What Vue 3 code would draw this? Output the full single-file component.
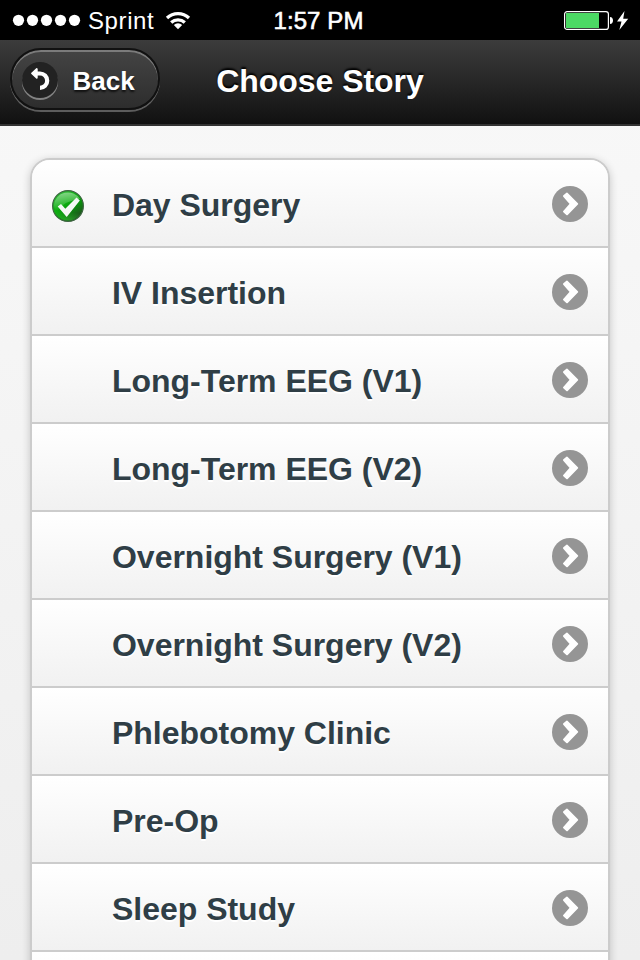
<script setup>
const stories = [
  'Day Surgery',
  'IV Insertion',
  'Long-Term EEG (V1)',
  'Long-Term EEG (V2)',
  'Overnight Surgery (V1)',
  'Overnight Surgery (V2)',
  'Phlebotomy Clinic',
  'Pre-Op',
  'Sleep Study',
  '',
]
const selected = 'Day Surgery'
</script>

<template>
  <div class="screen">
    <div class="status">
      <div class="carrier">
        <svg class="dots" width="69" height="12" viewBox="0 0 69 12" fill="#fff">
          <circle v-for="n in 5" :key="n" :cx="n * 14 - 7.5" cy="6.3" r="5.6" />
        </svg>
        <span class="name">Sprint</span>
        <svg class="wifi" width="26" height="20" viewBox="0 0 26 20">
          <g fill="none" stroke="#fff" stroke-width="3.3">
            <path d="M2 8a16 16 0 0 1 22 0" />
            <path d="M6.200 12.500a10 10 0 0 1 13.600 0" />
          </g>
          <path d="M13 19.300l-4.200-4.300a6.200 6.200 0 0 1 8.400 0z" fill="#fff" />
        </svg>
      </div>
      <div class="time">1:57 PM</div>
      <div class="power">
        <svg width="66" height="24" viewBox="0 0 66 24">
          <rect x="1.600" y="3.600" width="43.800" height="17.800" rx="2.500" fill="#000" stroke="#fff" stroke-width="1.200" />
          <rect x="3" y="5" width="33" height="15" fill="#4cd964" />
          <path d="M47 9c4 0 4 7 0 7z" fill="#fff" />
          <path d="M61.500 3L54 13.400h4.500L56.300 22L65.200 10.800h-5z" fill="#fff" />
        </svg>
      </div>
    </div>

    <header class="bar">
      <button class="back">
        <span class="disc">
          <svg width="36" height="36" viewBox="0 0 36 36">
            <path d="M13 11.500H18a7.200 7.200 0 0 1 0 14.400" fill="none" stroke="#fff" stroke-width="4.200" />
            <path d="M10 11.300L14.800 7V15.800z" fill="#fff" stroke="#fff" stroke-width="1.800" stroke-linejoin="round" />
          </svg>
        </span>
        <span class="label">Back</span>
      </button>
      <h1>Choose Story</h1>
      <span></span>
    </header>

    <main>
      <ul class="list">
        <li v-for="story in stories" :key="story">
          <span class="mark">
            <svg v-if="story === selected" width="32" height="32" viewBox="0 0 32 32">
              <defs>
                <linearGradient id="ball" x1="0.15" y1="0" x2="0.85" y2="1">
                  <stop offset="0" stop-color="#38bd40" />
                  <stop offset="0.4" stop-color="#0cae0f" />
                  <stop offset="0.6" stop-color="#0a8f0d" />
                  <stop offset="0.85" stop-color="#1d5a1c" />
                </linearGradient>
                <linearGradient id="gloss" x1="0" y1="0" x2="0" y2="1">
                  <stop offset="0" stop-color="#fff" stop-opacity="0.42" />
                  <stop offset="1" stop-color="#fff" stop-opacity="0" />
                </linearGradient>
                <linearGradient id="glow" x1="0.3" y1="0" x2="0.15" y2="1">
                  <stop offset="0.650" stop-color="#30d830" stop-opacity="0" />
                  <stop offset="1" stop-color="#30d830" stop-opacity="0.6" />
                </linearGradient>
              </defs>
              <circle cx="16" cy="16" r="15.400" fill="url(#ball)" stroke="#3f6643" stroke-width="1.200" />
              <circle cx="16" cy="16" r="14.500" fill="url(#glow)" />
              <path d="M2 15a14 13.500 0 0 1 26-6Q14 10 5 21Q2 19 2 15z" fill="url(#gloss)" />
              <path d="M5.700 16.500L9 14L13.300 18.800L24.500 7.500L27.800 10.500L14.700 27z" fill="#f4f8f4" />
            </svg>
          </span>
          <span class="story">{{ story }}</span>
          <svg class="go" width="36" height="36" viewBox="0 0 36 36">
            <circle cx="18" cy="18" r="18" fill="#959595" />
            <path d="M12 10L15 7.600L25.200 17.900L15 28.200L12 25.600L18.800 17.900z" fill="#fff" stroke="#fff" stroke-width="2" stroke-linejoin="round" />
          </svg>
        </li>
      </ul>
    </main>
  </div>
</template>

<style>
body {
  margin: 0;
  overflow: hidden;
}
</style>

<style scoped>
.screen {
  box-sizing: border-box;
  width: 640px;
  height: 960px;
  overflow: hidden;
  font-family: "Liberation Sans", Arial, sans-serif;
  background: linear-gradient(#f9f9f9, #eee);
}
.status {
  display: grid;
  grid-template-columns: 1fr auto 1fr;
  height: 40px;
  align-items: center;
  background: #000;
  color: #fff;
  font-size: 24px;
}
.carrier {
  display: flex;
  align-items: center;
  padding-left: 12px;
}
.name {
  margin-left: 7px;
  line-height: 28px;
  padding-top: 2px;
  letter-spacing: 0.6px;
}
.wifi {
  margin-left: 11px;
}
.time {
  padding: 2px 3px 0 0;
  line-height: 28px;
  letter-spacing: 0.1px;
  -webkit-text-stroke: 0.6px #fff;
}
.power {
  display: flex;
  justify-content: flex-end;
  padding-right: 11px;
}
.bar {
  box-sizing: border-box;
  display: grid;
  grid-template-columns: 206px 1fr 206px;
  height: 86px;
  padding-top: 8px;
  background: linear-gradient(#3c3c3c, #111);
  border-bottom: 2px solid #333;
  color: #fff;
}
.back {
  box-sizing: border-box;
  display: flex;
  align-items: center;
  width: 150px;
  height: 62px;
  margin: 0 0 0 10px;
  padding: 0 0 0 10px;
  border: 2px solid #111;
  border-radius: 31px;
  background: linear-gradient(#444, #2d2d2d);
  box-shadow: inset 0 2px 0 rgba(255, 255, 255, 0.3), 0 2px 0 rgba(255, 255, 255, 0.3);
  color: #fff;
  font: bold 26px/30px "Liberation Sans", Arial, sans-serif;
  text-shadow: 0 2px 2px #111;
}
.disc {
  width: 36px;
  height: 36px;
  margin-top: 2px;
  border-radius: 50%;
  background: #222;
  box-shadow: 0 2px 0 rgba(255, 255, 255, 0.4);
}
.disc svg {
  display: block;
}
.label {
  margin: 4px 0 0 14.5px;
}
h1 {
  margin: 14px 0 0;
  font-size: 32px;
  line-height: 38px;
  text-align: center;
  white-space: nowrap;
  letter-spacing: -0.05px;
  text-shadow: 0 -2px 2px #000;
}
main {
  padding: 32px 30px 0;
}
.list {
  margin: 0;
  padding: 0;
  list-style: none;
  border: 2px solid #ccc;
  border-radius: 20px;
  overflow: hidden;
  box-shadow: 0 2px 8px rgba(0, 0, 0, 0.2);
}
li {
  box-sizing: border-box;
  display: flex;
  align-items: center;
  height: 88px;
  padding: 0 20px;
  border-bottom: 2px solid #ccc;
  background: linear-gradient(#fff, #f1f1f1);
  color: #2f3e46;
  font-size: 32px;
  font-weight: bold;
  letter-spacing: -0.02px;
  text-shadow: 0 2px 0 #fff;
}
.mark {
  width: 60px;
  height: 32px;
  margin-top: 6px;
}
.mark svg {
  display: block;
}
.story {
  flex: 1;
  line-height: 38px;
  margin-top: 4px;
}
.go {
  margin-top: 2px;
}
</style>
